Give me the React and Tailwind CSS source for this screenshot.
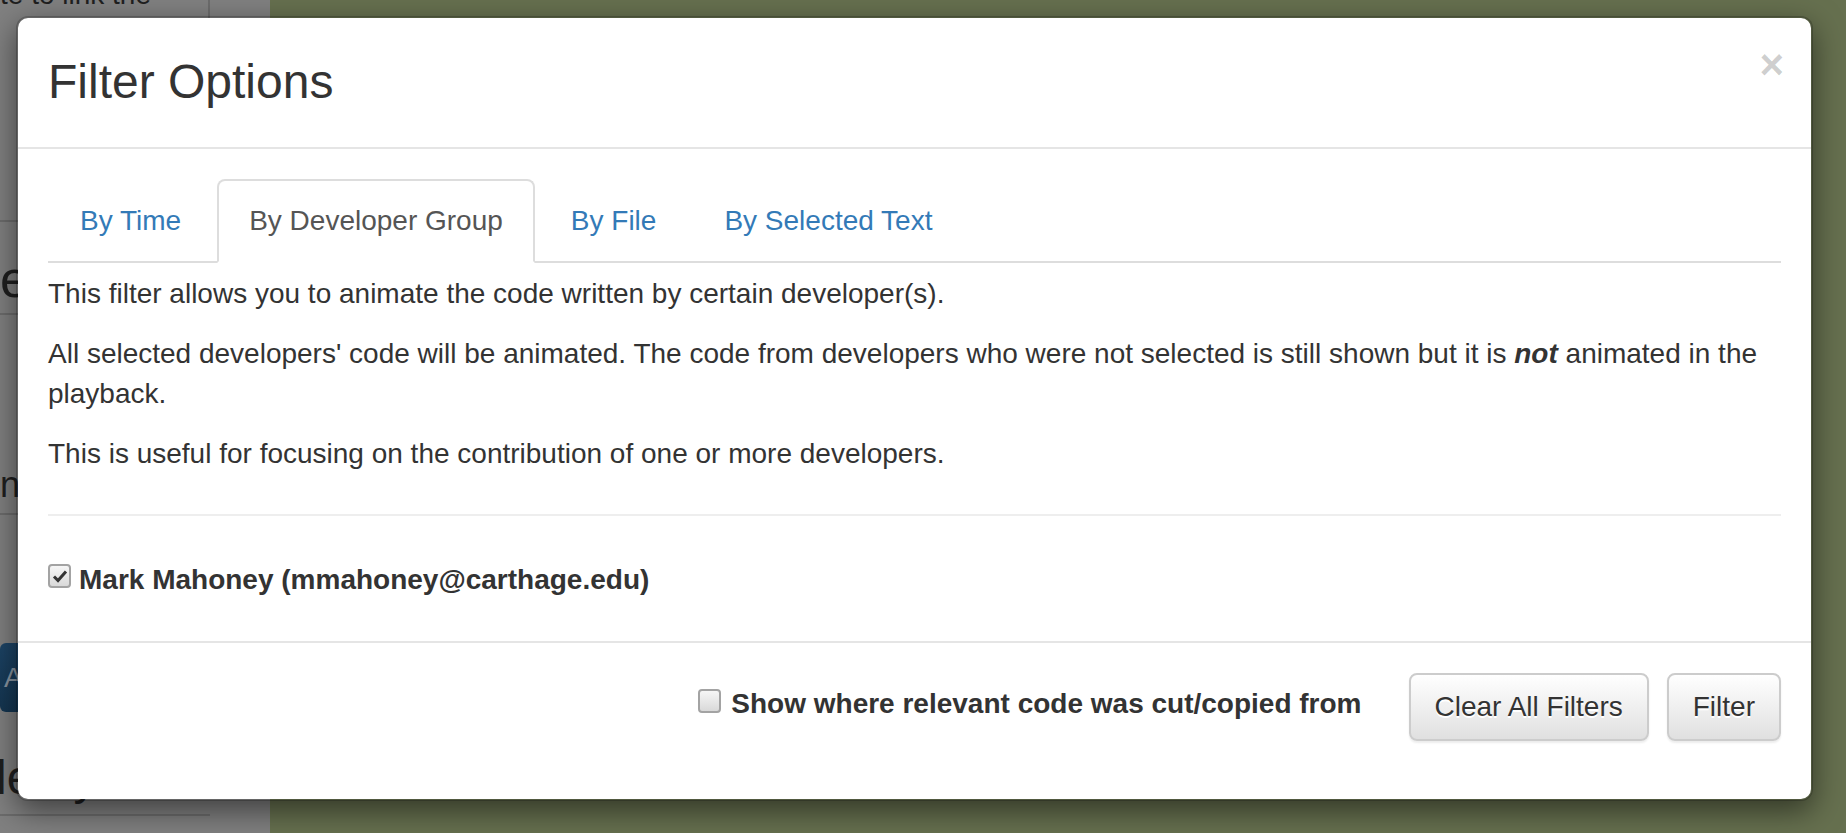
import React from "react"

const Box = ({ checked }) => (
  <span className="flex h-[24px] w-[23px] shrink-0 items-center justify-center rounded-[4px] border-2 border-[#a3a3a3] bg-gradient-to-b from-[#f6f6f6] to-[#d9d9d9]">
    {checked && (
      <svg width="16" height="16" viewBox="0 0 16 16">
        <path d="M2 8.5 L6 12.5 L14 3.5" fill="none" stroke="#333" strokeWidth="3" strokeLinejoin="miter" />
      </svg>
    )}
  </span>
)

const Tab = ({ label, active }) => (
  <li
    className={
      active
        ? "-mb-[2px] mr-[4px] rounded-t-[8px] border-2 border-[#ddd] border-b-white bg-white px-[30px] py-[20px] leading-[40px] text-[#555]"
        : "-mb-[2px] mr-[4px] rounded-t-[8px] border-2 border-transparent px-[30px] py-[20px] leading-[40px] text-[#337ab7]"
    }
  >
    {label}
  </li>
)

const Backdrop = () => (
  <div className="flex h-[833px] w-[1846px] overflow-hidden">
    <div className="w-[270px] shrink-0 bg-[#808080] text-[#1f1f1f]">
      <div className="h-[222px] border-b-2 border-[#6c6c6c]">
        <div className="h-[60px] w-[210px] overflow-hidden border-r-2 border-[#6c6c6c]">
          <p className="-mt-[25px] text-[28px] leading-[40px]">te to link the</p>
        </div>
      </div>
      <div className="h-[93px] border-b-2 border-[#6c6c6c] pt-[27px] text-[52px] leading-[60px]">e</div>
      <div className="h-[200px] border-b-2 border-[#6c6c6c] pt-[146px] text-[36px] leading-[48px]">n</div>
      <div className="h-[128px]" />
      <div className="flex h-[69px] w-[200px] items-center rounded-[6px] bg-gradient-to-b from-[#1d4466] to-[#143550] pl-[4px] text-[28px] text-[#8a96a2]">A</div>
      <div className="h-[104px] w-[210px] overflow-hidden border-b-2 border-[#6c6c6c] pt-[38px] text-[48px] leading-[56px]">
        <span className="-ml-[4px]">lenty</span>
      </div>
    </div>
    <div className="flex-1 bg-[#66704f]" />
  </div>
)

export default function App() {
  return (
    <div className="relative h-[833px] w-[1846px] overflow-hidden font-['Liberation_Sans',Arial,sans-serif] text-[#333]">
      <Backdrop />
      <div className="absolute inset-0 pl-[16px] pt-[16px]">
        <div className="w-[1797px] rounded-[12px] border-2 border-black/20 bg-white bg-clip-padding shadow-[0_10px_30px_rgba(0,0,0,0.5)]">
          {/* header */}
          <div className="flex items-start justify-between border-b-2 border-[#e5e5e5] p-[30px]">
            <h4 className="text-[48px] leading-[1.42857] font-normal">Filter Options</h4>
            <span className="-mt-[4px] -mr-[3px] text-[42px] leading-none font-bold text-black/20">×</span>
          </div>

          {/* body */}
          <div className="px-[30px] pt-[30px] pb-[30px] text-[28px]">
            <ul className="flex border-b-2 border-[#ddd]">
              <Tab label="By Time" />
              <Tab label="By Developer Group" active />
              <Tab label="By File" />
              <Tab label="By Selected Text" />
            </ul>
            <div className="pt-[11px] leading-[40px]">
              <p className="mb-[20px]">This filter allows you to animate the code written by certain developer(s).</p>
              <p className="mb-[20px]">
                All selected developers' code will be animated. The code from developers who were not selected is still shown but it is <b><i>not</i></b> animated in the playback.
              </p>
              <p className="mb-[20px]">This is useful for focusing on the contribution of one or more developers.</p>
              <hr className="my-[40px] border-t-2 border-[#eee]" />
              <div className="pt-[4px] pb-[11px]">
                <label className="flex items-start gap-[8px] font-bold">
                  <span className="mt-[4px] flex"><Box checked /></span>
                  Mark Mahoney (mmahoney@carthage.edu)
                </label>
              </div>
            </div>
          </div>

          {/* footer */}
          <div className="flex items-start justify-end border-t-2 border-[#e5e5e5] px-[30px] pt-[30px] pb-[58px] text-[28px] leading-[40px]">
            <label className="mt-[11px] mr-[47px] flex items-start gap-[10px] font-bold">
              <span className="mt-[5px] flex"><Box /></span>
              Show where relevant code was cut/copied from
            </label>
            <button className="rounded-[8px] border-2 border-[#ccc] bg-gradient-to-b from-white to-[#e0e0e0] px-[24px] py-[12px] text-[#333] shadow-[inset_0_2px_0_rgba(255,255,255,0.15),0_2px_2px_rgba(0,0,0,0.075)] [text-shadow:0_2px_0_#fff]">
              Clear All Filters
            </button>
            <button className="ml-[18px] rounded-[8px] border-2 border-[#ccc] bg-gradient-to-b from-white to-[#e0e0e0] px-[24px] py-[12px] text-[#333] shadow-[inset_0_2px_0_rgba(255,255,255,0.15),0_2px_2px_rgba(0,0,0,0.075)] [text-shadow:0_2px_0_#fff]">
              Filter
            </button>
          </div>
        </div>
      </div>
    </div>
  )
}
